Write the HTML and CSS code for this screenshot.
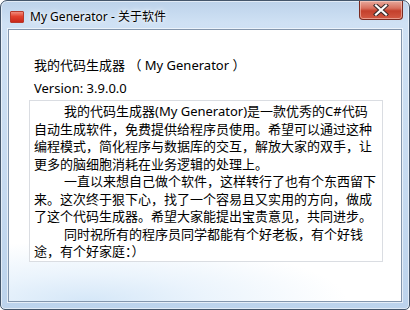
FILE: index.html
```html
<!DOCTYPE html>
<html lang="zh-CN">
  <head>
    <meta charset="UTF-8" />
    <title>My Generator - 关于软件</title>
    <link rel="stylesheet" href="styles.css">
  </head>
  <body>
    <div class="window">
      <div class="titlebar">
        <span class="app-icon"></span>
        <span class="title">My Generator - 关于软件</span>
        <span class="close-btn">
          <svg width="16" height="12" viewBox="0 0 16 12">
            <path d="M3 1.5 L13 10.5 M13 1.5 L3 10.5" stroke="#3a2a2a" stroke-width="4.2" stroke-linecap="square" fill="none" />
            <path d="M3 1.5 L13 10.5 M13 1.5 L3 10.5" stroke="#ffffff" stroke-width="2.2" stroke-linecap="square" fill="none" />
          </svg>
        </span>
      </div>
      <div class="client">
        <div class="app-name">我的代码生成器 （ My Generator ）</div>
        <div class="version">Version: 3.9.0.0</div>
        <div class="about-box">
          <p class="para">我的代码生成器(My Generator)是一款优秀的C#代码<br>自动生成软件，免费提供给程序员使用。希望可以通过这种<br>编程模式，简化程序与数据库的交互，解放大家的双手，让<br>更多的脑细胞消耗在业务逻辑的处理上。</p>
          <p class="para">一直以来想自己做个软件，这样转行了也有个东西留下<br>来。这次终于狠下心，找了一个容易且又实用的方向，做成<br>了这个代码生成器。希望大家能提出宝贵意见，共同进步。</p>
          <p class="para">同时祝所有的程序员同学都能有个好老板，有个好钱<br>途，有个好家庭：）</p>
        </div>
      </div>
    </div>
  </body>
</html>
```

FILE: styles.css
```css
body {
  margin: 0;
  background: #ffffff;
}
.window {
  width: 410px;
  height: 310px;
  box-sizing: border-box;
  border: 1px solid #44566b;
  border-radius: 7px 7px 5px 5px;
  padding: 0 7px 7px 7px;
  background: linear-gradient(to bottom, #bcd2ea 0px, #cfe1f4 22px, #c6daf0 60%, #bcd3ec 100%);
  box-shadow: inset 0 0 0 1px rgba(255, 255, 255, 0.55);
  display: flex;
  flex-direction: column;
}
.titlebar {
  height: 28px;
  display: flex;
  align-items: flex-start;
  font-family: "Noto Sans", "Noto Sans CJK SC", sans-serif;
  font-size: 12px;
  color: #000;
}
.app-icon {
  width: 12px;
  height: 10px;
  margin: 10px 0 0 2px;
  background: linear-gradient(to bottom, #f08b7c 0%, #e2402e 45%, #c8281a 100%);
  border: 1px solid #b83a2c;
  border-radius: 1px;
}
.title {
  margin: 6px 0 0 6px;
  text-shadow: 0 0 6px #ffffff, 0 0 3px #ffffff;
}
.close-btn {
  margin-left: auto;
  margin-right: -1px;
  width: 44px;
  height: 19px;
  box-sizing: border-box;
  border: 1px solid #7a2a20;
  border-top: none;
  border-radius: 0 0 4px 4px;
  background: linear-gradient(to bottom, #e7a99c 0%, #d8705e 40%, #c4402c 55%, #d35a44 100%);
  box-shadow: inset 0 0 0 1px rgba(255, 220, 210, 0.5);
  display: flex;
  align-items: center;
  justify-content: center;
}
.client {
  flex: 1;
  border: 1px solid #8396ad;
  box-shadow: 0 0 0 1px rgba(255, 255, 255, 0.6);
  background:
    radial-gradient(ellipse 260px 60px at 20% 100%, #d5e7f8 0%, rgba(226, 239, 251, 0.7) 45%, rgba(255, 255, 255, 0) 100%),
    #ffffff;
  font-family: "Noto Sans", "Noto Sans CJK SC", sans-serif;
  font-size: 13px;
  color: #000;
  padding: 0 0 0 20px;
}
.app-name {
  margin: 26px 0 0 5px;
  line-height: 18px;
}
.version {
  margin: 5px 0 0 5px;
  line-height: 18px;
}
.about-box {
  margin-top: 3px;
  width: 354px;
  height: 162px;
  box-sizing: border-box;
  border: 1px solid #dadde2;
  background: #ffffff;
  padding: 2px 4px;
  white-space: nowrap;
}
.para {
  margin: 0;
  line-height: 17.5px;
  text-indent: 30px;
}
```
